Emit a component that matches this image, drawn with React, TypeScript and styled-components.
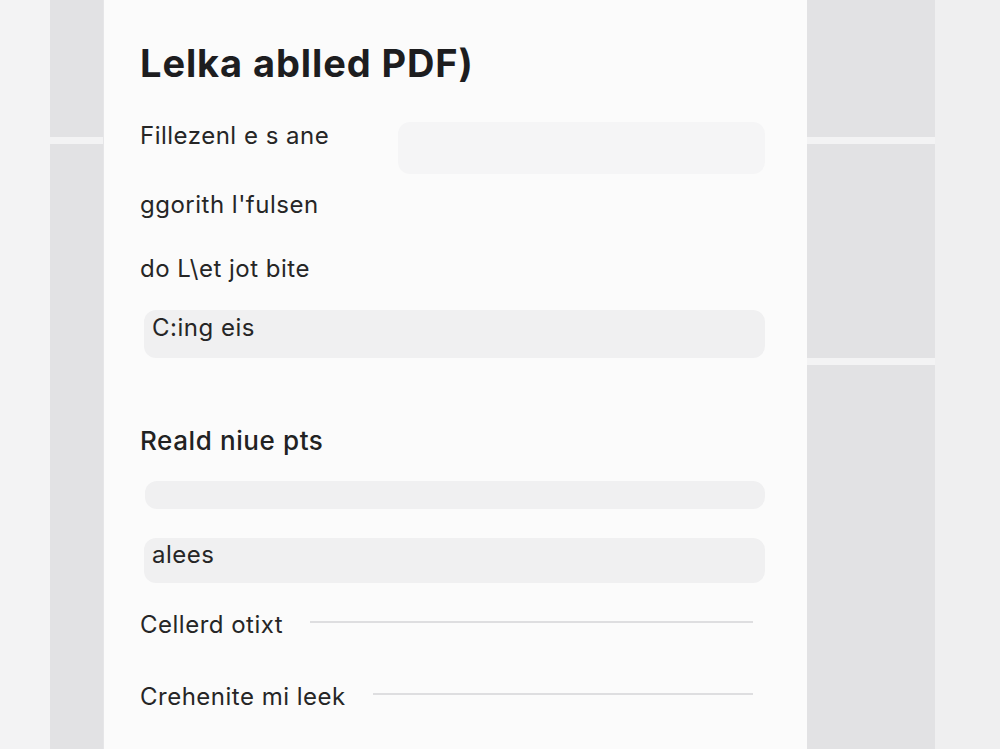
import React, { FC } from 'react';
import styled, { createGlobalStyle } from 'styled-components';

const GlobalStyle = createGlobalStyle`
  html, body {
    margin: 0;
    padding: 0;
    height: 100%;
    background: #f0f0f1;
    font-family: Inter, "Liberation Sans", Arial, sans-serif;
    color: #222;
  }
  #root {
    height: 100%;
  }
`;

const Page = styled.div`
  display: flex;
  height: 749px;
  overflow: hidden;
`;

const Margin = styled.div`
  flex: 0 0 ${({ $w }) => $w}px;
  background: ${({ $bg }) => $bg};
`;

const Rail = styled.div`
  flex: 0 0 ${({ $w }) => $w}px;
  display: flex;
  flex-direction: column;
  gap: 7px;
  background: #f3f3f4;
`;

const Tile = styled.div`
  flex: ${({ $h }) => ($h ? `0 0 ${$h}px` : '1 1 auto')};
  background: #e2e2e4;
`;

const Card = styled.main`
  flex: 0 0 704px;
  box-sizing: border-box;
  background: #fbfbfb;
  border-left: 1px solid #e6e6e8;
  padding: 40px 40px 0 36px;
  display: flex;
  flex-direction: column;
`;

const Title = styled.h1`
  margin: 0;
  font-size: 38px;
  line-height: 46px;
  font-weight: 700;
  color: #1d1d1f;
  letter-spacing: 0.9px;
`;

const Label = styled.div`
  font-size: 24px;
  line-height: 28px;
  letter-spacing: 0.5px;
  color: #262626;
  white-space: nowrap;
  margin-top: ${({ $mt }) => $mt || 0}px;
`;

const FieldRow = styled.div`
  display: grid;
  grid-template-columns: 258px 369px;
  align-items: start;
  margin-top: ${({ $mt }) => $mt || 0}px;
`;

const Pill = styled.div`
  box-sizing: border-box;
  height: ${({ $h }) => $h}px;
  margin: ${({ $mt }) => $mt || 0}px 2px 0 ${({ $ml }) => $ml ?? 4}px;
  border-radius: 12px;
  background: ${({ $soft }) => ($soft ? '#f5f5f6' : '#f0f0f1')};
  padding: ${({ $pt }) => $pt || 0}px 10px 0 8px;
  font-size: 24px;
  line-height: 28px;
  letter-spacing: 0.5px;
  color: #262626;
`;

const Heading = styled.h2`
  margin: 67px 0 0;
  font-size: 26px;
  line-height: 32px;
  font-weight: 500;
  letter-spacing: 0.6px;
  color: #222;
`;

const LineRow = styled.div`
  display: flex;
  align-items: center;
  gap: 27px;
  margin-top: ${({ $mt }) => $mt}px;
  padding-right: 14px;
`;

const Rule = styled.div`
  flex: 1;
  height: 2px;
  margin-top: -6px;
  background: #dedee0;
`;

const Section: FC = () => (
  <Card>
    <Title>Lelka ablled PDF)</Title>
    <FieldRow $mt={36}>
      <Label>Fillezenl e s ane</Label>
      <Pill $h={52} $ml={0} $soft />
    </FieldRow>
    <Label $mt={17}>ggorith l'fulsen</Label>
    <Label $mt={36}>do L\et jot bite</Label>
    <Pill $h={48} $mt={27} $pt={4}>C:ing eis</Pill>
    <Heading>Reald niue pts</Heading>
    <Pill $h={28} $mt={24} $ml={5} />
    <Pill $h={45} $mt={29} $pt={3} $ml={4}>alees</Pill>
    <LineRow $mt={28}>
      <Label>Cellerd otixt</Label>
      <Rule />
    </LineRow>
    <LineRow $mt={44}>
      <Label>Crehenite mi leek</Label>
      <Rule />
    </LineRow>
  </Card>
);

const App: FC = () => (
  <>
    <GlobalStyle />
    <Page>
      <Margin $w={50} $bg="#f3f3f4" />
      <Rail $w={53}>
        <Tile $h={137} />
        <Tile />
      </Rail>
      <Section />
      <Rail $w={128}>
        <Tile $h={137} />
        <Tile $h={214} />
        <Tile />
      </Rail>
      <Margin $w={65} $bg="#efeff0" />
    </Page>
  </>
);

export default App;
